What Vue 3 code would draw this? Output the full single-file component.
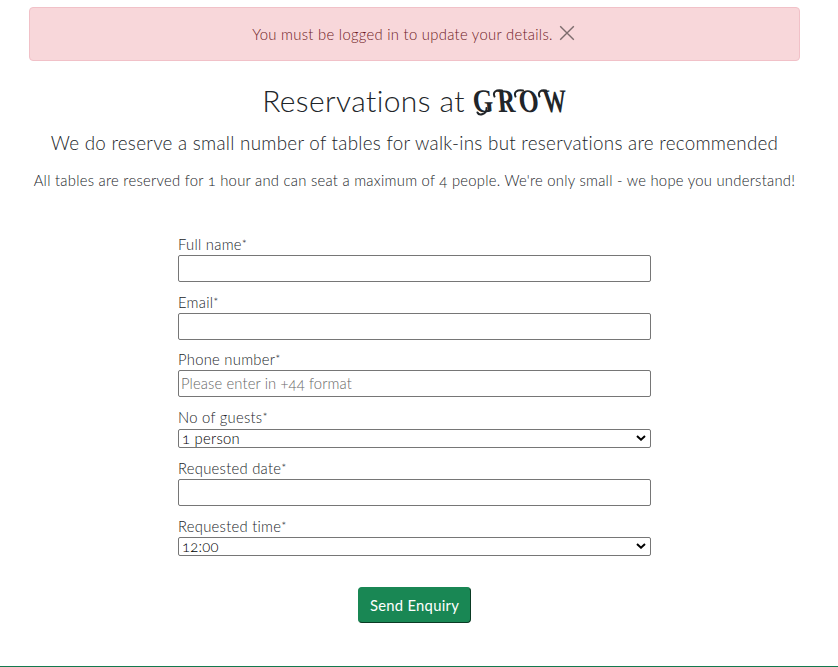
<script setup>
import { ref } from 'vue'

const showAlert = ref(true)
const fields = [
  { id: 'name', label: 'Full name*', type: 'text' },
  { id: 'email', label: 'Email*', type: 'email' },
  { id: 'phone', label: 'Phone number*', type: 'text', placeholder: 'Please enter in +44 format' },
  { id: 'guests', label: 'No of guests*', options: ['1 person', '2 people', '3 people', '4 people'] },
  { id: 'date', label: 'Requested date*', type: 'text' },
  { id: 'time', label: 'Requested time*', options: ['12:00', '13:00', '14:00', '15:00'] },
]
</script>

<template>
  <main class="page">
    <div v-if="showAlert" class="alert" role="alert">
      <span class="alert-text">You must be logged in to update your details.</span>
      <button class="close" type="button" aria-label="Close" @click="showAlert = false">
        <svg viewBox="0 0 16 16" width="16" height="16"><path d="M1.2 1.2 14.8 14.8M14.8 1.2 1.2 14.8" /></svg>
      </button>
    </div>
    <h1>
      <span class="title">Reservations at</span>
      <span class="brand">
        <span class="brand-name">GROW</span>
        <svg class="swashes" viewBox="0 0 94 37" width="94" height="37" aria-hidden="true">
          <path d="M21.5 14.5C19.5 10 23 7.5 29 8.5M42.5 14.5C40.5 10 44 7.5 50 8.5M66.5 14.5C64.500 10 68 7.500 73 8.500M13.500 26C14 32.500 6 34 4.500 30.500" />
        </svg>
      </span>
    </h1>
    <h2>We do reserve a small number of tables for walk-ins but reservations are recommended</h2>
    <p class="note">All tables are reserved for 1 hour and can seat a maximum of 4 people. We're only small - we hope you understand!</p>
    <form class="form" @submit.prevent>
      <div v-for="f in fields" :key="f.id" class="field" :class="f.id">
        <label :for="f.id"><span>{{ f.label.slice(0, -1) }}</span><span class="star">*</span></label>
        <div v-if="f.options" class="select">
          <select :id="f.id">
            <option v-for="o in f.options" :key="o">{{ o }}</option>
          </select>
          <svg class="chevron" viewBox="0 0 10 6" width="10" height="6" aria-hidden="true"><path d="M1 1 5 4.700 9 1" /></svg>
        </div>
        <input v-else :id="f.id" :type="f.type" :placeholder="f.placeholder" />
      </div>
      <button class="submit" type="submit">Send Enquiry</button>
    </form>
  </main>
</template>

<style>
body {
  background: #fff;
}
</style>

<style scoped>
.page {
  box-sizing: border-box;
  height: 667px;
  padding: 7px 38px 0 29px;
  border-bottom: 1px solid #13794d;
  display: flex;
  flex-direction: column;
  align-items: center;
  font-family: Lato, "Open Sans", sans-serif;
  font-size: 14.8px;
  font-weight: 300;
  letter-spacing: 0.27px;
  font-feature-settings: "onum" 1, "liga" 0;
  color: #212529;
  overflow: hidden;
  white-space: nowrap;
}
.alert {
  box-sizing: border-box;
  width: 100%;
  height: 54px;
  flex: none;
  display: flex;
  align-items: center;
  justify-content: center;
  gap: 6px;
  padding-right: 2px;
  border: 1px solid #f1c1c8;
  border-radius: 4px;
  background: #f8d7da;
  color: #6e1a25;
}
.alert-text {
  letter-spacing: 0.3px;
}
.close {
  display: flex;
  padding: 0;
  margin-bottom: 3px;
  border: 0;
  background: none;
}
.close path {
  fill: none;
  stroke: #7c6c6d;
  stroke-width: 1.4;
}
h1 {
  display: flex;
  align-items: baseline;
  gap: 8px;
  margin: 21px 0 0;
  height: 37px;
  line-height: 37px;
  font-size: 30px;
  font-weight: 300;
  letter-spacing: 0.4px;
}
.brand {
  position: relative;
  width: 94px;
}
.brand-name {
  display: inline-block;
  font-family: "Liberation Serif", serif;
  font-style: italic;
  font-weight: 700;
  font-size: 33px;
  letter-spacing: 5px;
  transform-origin: left center;
  transform: skewX(13deg) scaleX(0.82);
}
.swashes {
  position: absolute;
  left: 0;
  top: 0;
  fill: none;
  stroke: #212529;
  stroke-width: 2;
  stroke-linecap: round;
}
h2 {
  margin: 12px 0 0;
  height: 24px;
  line-height: 24px;
  font-size: 18.8px;
  font-weight: 300;
  letter-spacing: 0.28px;
}
.note {
  margin: 14px 0 0;
  height: 22px;
  line-height: 22px;
}
.form {
  width: 473px;
  margin-top: 43px;
  display: flex;
  flex-direction: column;
  gap: 10px;
}
.field {
  display: flex;
  flex-direction: column;
}
.phone {
  margin-top: -1px;
}
label {
  height: 21px;
  line-height: 20px;
}
.name label,
.phone label {
  line-height: 21px;
}
.guests label {
  height: 22px;
}
.star {
  font-size: 12px;
  vertical-align: 2px;
  line-height: 1;
}
input,
select {
  display: block;
  box-sizing: border-box;
  width: 100%;
  margin: 0;
  border: 1px solid #767676;
  border-radius: 2px;
  background: #fff;
  color: #212529;
  font: inherit;
  letter-spacing: inherit;
  font-feature-settings: inherit;
}
input {
  height: 27px;
  padding: 1px 2px 2px;
}
.select {
  position: relative;
}
select {
  appearance: none;
  height: 19px;
  padding: 0 3px;
  line-height: 17px;
  color: #000;
}
.chevron {
  position: absolute;
  right: 5px;
  top: 6px;
  pointer-events: none;
  fill: none;
  stroke: #000;
  stroke-width: 2;
}
input::placeholder {
  color: #676767;
  letter-spacing: 0.12px;
}
.submit {
  align-self: center;
  width: 113px;
  height: 36px;
  margin-top: 21px;
  padding: 0 0 1px;
  border: 1px solid #198754;
  border-right-color: #0b3a24;
  border-bottom-color: #0b3a24;
  border-radius: 4px;
  background: #198754;
  color: #fff;
  font: 400 14.8px Lato, sans-serif;
  letter-spacing: 0.27px;
}
</style>
